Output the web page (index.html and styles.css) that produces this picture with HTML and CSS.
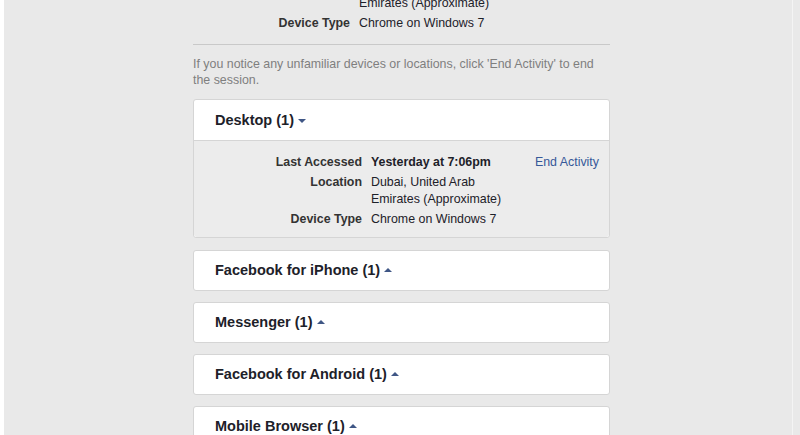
FILE: index.html
```html
<!DOCTYPE html>
<html>
<head>
<meta charset="utf-8">
<link rel="stylesheet" href="styles.css">
</head>
<body>
<div class="page">
  <div class="col">
    <div class="summary">
      <div class="row">
        <div class="label">Location</div>
        <div class="value">Dubai, United Arab Emirates (Approximate)</div>
      </div>
      <div class="row">
        <div class="label">Device Type</div>
        <div class="value">Chrome on Windows 7</div>
      </div>
    </div>
    <p class="info">If you notice any unfamiliar devices or locations, click 'End Activity' to end the session.</p>

    <div class="card open">
      <div class="card-head">Desktop (1)<span class="arrow down"></span></div>
      <div class="card-body">
        <div class="row">
          <div class="label">Last Accessed</div>
          <div class="value strong">Yesterday at 7:06pm</div>
          <a class="action" href="#">End Activity</a>
        </div>
        <div class="row">
          <div class="label">Location</div>
          <div class="value">Dubai, United Arab Emirates (Approximate)</div>
        </div>
        <div class="row">
          <div class="label">Device Type</div>
          <div class="value">Chrome on Windows 7</div>
        </div>
      </div>
    </div>

    <div class="card">
      <div class="card-head">Facebook for iPhone (1)<span class="arrow up"></span></div>
    </div>
    <div class="card">
      <div class="card-head">Messenger (1)<span class="arrow up"></span></div>
    </div>
    <div class="card">
      <div class="card-head">Facebook for Android (1)<span class="arrow up"></span></div>
    </div>
    <div class="card">
      <div class="card-head">Mobile Browser (1)<span class="arrow up"></span></div>
    </div>
  </div>
</div>
</body>
</html>
```
FILE: styles.css
```css
html, body {
  margin: 0;
  padding: 0;
  background: #e9e9e9;
  font-family: "Liberation Sans", Arial, sans-serif;
  font-size: 12.4px;
  color: #1d2129;
}

.page {
  width: 788px;
  height: 435px;
  overflow: hidden;
  background: #e9e9e9;
  border-left: 4px solid #ffffff;
  border-right: 1px solid #f4f4f4;
}

.col {
  width: 417px;
  margin-left: 189px;
}

.summary {
  margin-top: -22px;
  padding-bottom: 12px;
  border-bottom: 1px solid #c9c9c9;
  display: flex;
  flex-direction: column;
  gap: 3px;
}

.row {
  display: grid;
  grid-template-columns: 169px 145px 1fr;
  column-gap: 9px;
  line-height: 17px;
}

.summary .row {
  grid-template-columns: 157px 145px 1fr;
}

.label {
  text-align: right;
  font-weight: bold;
  color: #333333;
}

.value {
  color: #1d2129;
}

.value.strong {
  font-weight: bold;
}

.action {
  text-align: right;
  padding-right: 10px;
  color: #365899;
  text-decoration: none;
}

.info {
  margin: 0;
  padding-top: 11px;
  line-height: 16px;
  color: #7f7f7f;
}

.card {
  margin-top: 11px;
  background: #ffffff;
  border: 1px solid #d5d5d5;
  border-radius: 3px;
}

.card.open + .card {
  margin-top: 12px;
}

.card-head {
  height: 39px;
  line-height: 39px;
  padding-left: 21px;
  font-size: 14.5px;
  font-weight: bold;
  color: #1d2129;
}

.card.open .card-head {
  height: 40px;
  line-height: 40px;
}

.card-body {
  background: #ececec;
  border-top: 1px solid #d5d5d5;
  border-radius: 0 0 3px 3px;
  padding: 13px 0 9px 0;
  display: flex;
  flex-direction: column;
  gap: 3px;
}

.card-body .row {
  margin-left: -1px;
}

.arrow {
  display: inline-block;
  width: 0;
  height: 0;
  margin-left: 4px;
  border-left: 4px solid transparent;
  border-right: 4px solid transparent;
  vertical-align: middle;
}

.arrow.down {
  border-top: 4px solid #3f5685;
}

.arrow.up {
  border-bottom: 4px solid #3f5685;
  position: relative;
  top: -1px;
}
```
